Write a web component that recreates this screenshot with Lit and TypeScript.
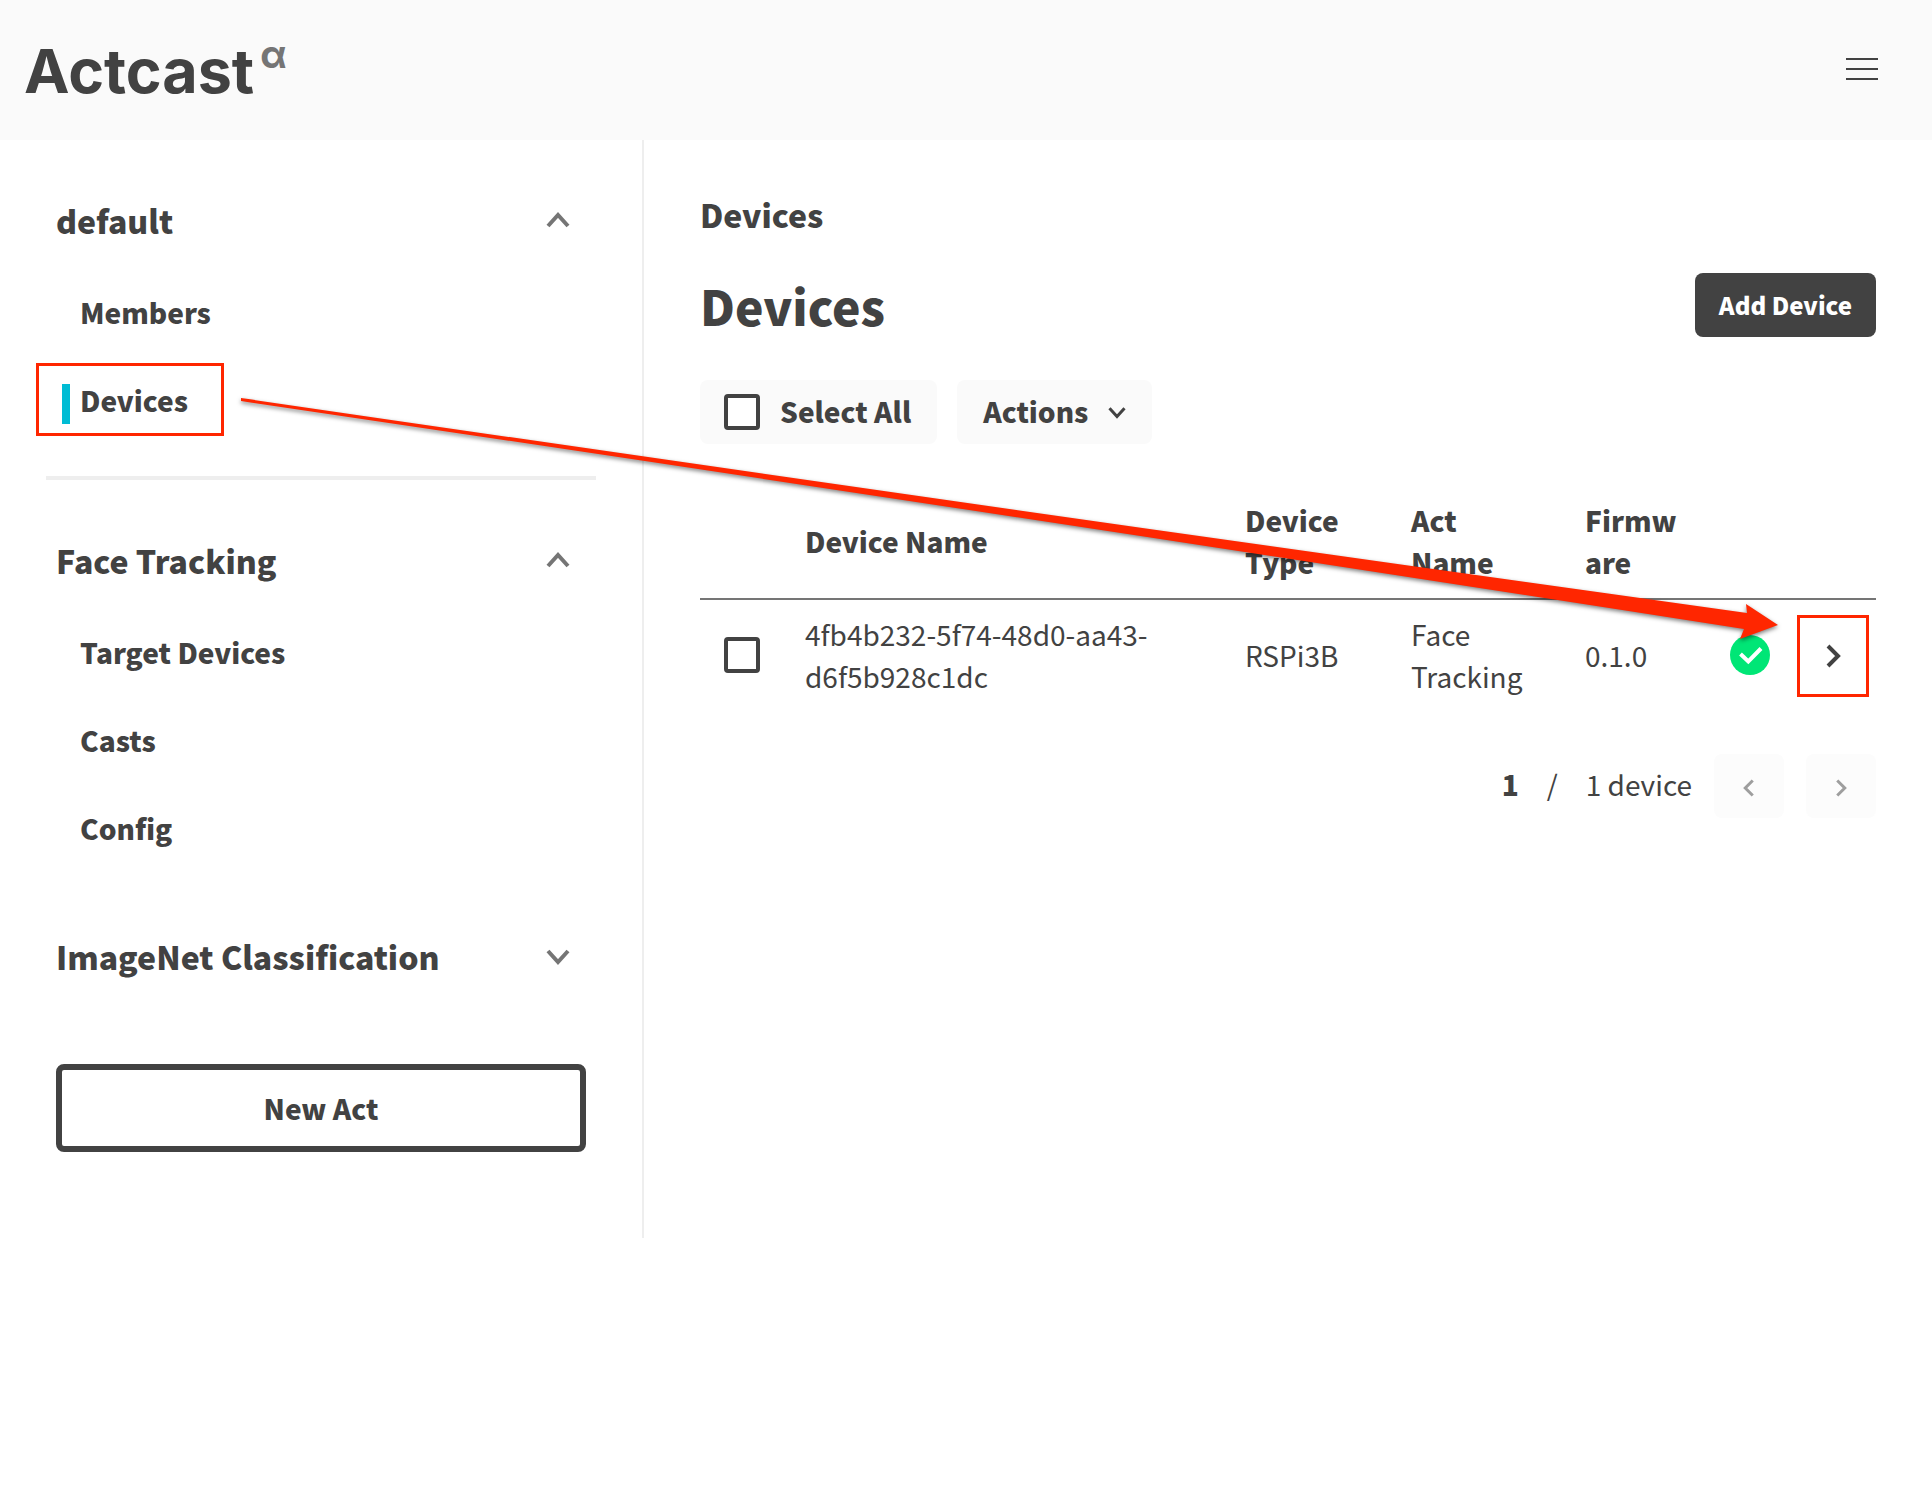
import { LitElement, html, css, svg } from "lit";
import { customElement, property, state } from "lit/decorators.js";
import { classMap } from "lit/directives/class-map.js";

type Direction = "up" | "down" | "left" | "right";

const CHEVRONS: Record<Direction, string> = {
  up: "M2 18 L12 7 L22 18",
  down: "M2 7 L12 18 L22 7",
  left: "M17 2 L7 12 L17 22",
  right: "M7 2 L17 12 L7 22",
};

@customElement("chevron-icon")
export class ChevronIcon extends LitElement {
  static styles = css`
    :host {
      display: block;
      flex: none;
      width: 24px;
      height: 24px;
    }
    :host([size="small"]) {
      width: 18px;
      height: 18px;
    }
    .icon {
      display: block;
      width: 100%;
      height: 100%;
      fill: none;
      stroke: currentColor;
      stroke-width: 4;
    }
  `;

  @property() direction: Direction = "down";

  render() {
    return html`<svg class="icon" viewBox="0 0 24 24" aria-hidden="true">
      ${svg`<path d=${CHEVRONS[this.direction]} />`}
    </svg>`;
  }
}

interface Section {
  name: string;
  open: boolean;
  links: string[];
}

interface Device {
  name: string;
  type: string;
  act: string;
  firmware: string;
}

@customElement("app-root")
export class AppRoot extends LitElement {
  static styles = css`
    :host {
      display: block;
      position: relative;
      min-height: 100vh;
      background: #fff;
      color: #424242;
      font-family: "Noto Sans CJK JP", "Noto Sans", sans-serif;
      font-size: 28px;
      line-height: 42px;
    }
    * {
      box-sizing: border-box;
    }
    button {
      padding: 0;
      border: 0;
      background: none;
      color: inherit;
      font: inherit;
      cursor: pointer;
    }
    a {
      color: inherit;
      text-decoration: none;
    }
    h1,
    p {
      margin: 0;
    }

    .topbar {
      display: flex;
      align-items: center;
      justify-content: space-between;
      height: 140px;
      padding: 0 54px 2px 24px;
      background: #fafafa;
    }
    .logo {
      display: flex;
      align-items: flex-start;
      gap: 6px;
      padding-top: 4px;
      font-family: Inter, sans-serif;
    }
    .wordmark {
      font-size: 61px;
      line-height: 72px;
      font-weight: 700;
    }
    .alpha {
      color: #757575;
      font-size: 38px;
      line-height: 38px;
      font-weight: 700;
    }
    .menu {
      display: flex;
      flex-direction: column;
      gap: 8px;
    }
    .menu-line {
      width: 32px;
      height: 2px;
      background: #424242;
    }

    .layout {
      display: flex;
      align-items: flex-start;
    }
    .sidebar {
      flex: 0 0 calc(100% / 3);
      padding: 32px 56px 86px;
      border-right: 2px solid #eee;
    }
    .section-toggle {
      display: flex;
      align-items: center;
      justify-content: space-between;
      width: 100%;
      height: 96px;
      padding-right: 16px;
      font-size: 32px;
      line-height: 48px;
      font-weight: 900;
      text-align: left;
    }
    .section-toggle chevron-icon {
      color: #757575;
    }
    .links {
      margin: 0;
      padding: 0;
      list-style: none;
    }
    .link {
      display: flex;
      align-items: center;
      position: relative;
      height: 88px;
      padding-left: 24px;
      font-weight: 900;
    }
    .link.current::before {
      content: "";
      position: absolute;
      left: 6px;
      top: 28px;
      width: 8px;
      height: 40px;
      background: #00bcd4;
    }
    .divider {
      height: 4px;
      margin: 32px -10px;
      border: 0;
      background: #eee;
    }
    .section + .section {
      margin-top: 36px;
    }
    .new-act {
      width: 100%;
      height: 88px;
      margin-top: 60px;
      border: 6px solid #424242;
      border-radius: 8px;
      font-weight: 900;
    }

    .main {
      flex: 1;
      min-width: 0;
      padding: 50px 56px 56px;
    }
    .crumb {
      font-size: 32px;
      line-height: 48px;
      font-weight: 900;
    }
    .title-row {
      display: flex;
      align-items: center;
      justify-content: space-between;
      margin-top: 31px;
    }
    .title {
      font-size: 48px;
      line-height: 72px;
      font-weight: 900;
    }
    .add {
      height: 64px;
      padding: 0 24px;
      border-radius: 8px;
      background: #424242;
      color: #fff;
      font-size: 24px;
      font-weight: 900;
    }
    .toolbar {
      display: flex;
      gap: 20px;
      margin-top: 39px;
    }
    .tool {
      display: flex;
      align-items: center;
      gap: 20px;
      height: 64px;
      padding: 0 26px;
      border-radius: 8px;
      background: #fafafa;
      font-weight: 900;
    }
    label.tool {
      padding-left: 24px;
    }
    .tool-text {
      padding-bottom: 2px;
    }
    .check {
      appearance: none;
      display: block;
      width: 36px;
      height: 36px;
      margin: 0;
      border: 4px solid #424242;
      border-radius: 4px;
      background: #fff;
    }
    .check:checked {
      background: #424242;
    }

    .devices {
      width: 100%;
      margin-top: 38px;
      border-spacing: 0;
      table-layout: fixed;
      text-align: left;
    }
    .devices th {
      padding: 17px 24px 15px 0;
      border-bottom: 2px solid #757575;
      font-weight: 900;
      overflow-wrap: anywhere;
    }
    .devices td {
      padding: 13px 24px 11px 0;
      overflow-wrap: anywhere;
    }
    .devices .pick {
      width: 105px;
      padding-left: 24px;
    }
    .type {
      width: 166px;
    }
    .devices .act {
      width: 174px;
      padding-right: 44px;
    }
    .firmware {
      width: 121px;
    }
    .devices .status {
      width: 88px;
      padding-right: 0;
    }
    .devices .open {
      width: 82px;
      padding: 0;
    }
    .ok {
      display: block;
      width: 40px;
      height: 40px;
      margin: 0 auto;
    }
    .details {
      display: flex;
      align-items: center;
      justify-content: center;
      position: relative;
      width: 72px;
      height: 82px;
      margin: 4px 0 0 3px;
    }

    .pager {
      display: flex;
      align-items: center;
      justify-content: flex-end;
      gap: 22px;
      margin-top: 46px;
    }
    .page {
      font-weight: 900;
    }
    .pager-text {
      display: flex;
      gap: 28px;
      padding-bottom: 4px;
    }
    .pager-button {
      display: flex;
      align-items: center;
      justify-content: center;
      width: 70px;
      height: 64px;
      padding-top: 4px;
      border-radius: 8px;
      background: #fcfcfc;
      color: #9e9e9e;
    }

    .mark {
      position: absolute;
      border: 3px solid #ff2600;
      pointer-events: none;
    }
    .mark-link {
      left: -20px;
      top: 7px;
      width: 188px;
      height: 73px;
    }
    .mark-details {
      inset: 0;
    }
    .arrow {
      position: absolute;
      left: 0;
      top: 0;
      width: 1800px;
      height: 660px;
      pointer-events: none;
      filter: drop-shadow(0 2px 2px rgba(0, 0, 0, 0.5));
    }
  `;

  @state() private sections: Section[] = [
    { name: "default", open: true, links: ["Members", "Devices"] },
    { name: "Face Tracking", open: true, links: ["Target Devices", "Casts", "Config"] },
    { name: "ImageNet Classification", open: false, links: [] },
  ];

  @state() private selected = false;

  private devices: Device[] = [
    {
      name: "4fb4b232-5f74-48d0-aa43-d6f5b928c1dc",
      type: "RSPi3B",
      act: "Face Tracking",
      firmware: "0.1.0",
    },
  ];

  private toggle(section: Section) {
    this.sections = this.sections.map((s) => (s === section ? { ...s, open: !s.open } : s));
  }

  private select(event: Event) {
    this.selected = (event.target as HTMLInputElement).checked;
  }

  private renderSection(section: Section) {
    return html`<section class="section">
      <button class="section-toggle" aria-expanded=${section.open} @click=${() => this.toggle(section)}>
        <span>${section.name}</span>
        <chevron-icon direction=${section.open ? "up" : "down"}></chevron-icon>
      </button>
      ${section.open
        ? html`<ul class="links">
            ${section.links.map((link) => {
              const current = link === "Devices";
              return html`<li>
                <a class=${classMap({ link: true, current })} href="#"
                  >${link}${current ? html`<span class="mark mark-link"></span>` : ""}</a
                >
              </li>`;
            })}
          </ul>`
        : ""}
    </section>`;
  }

  private renderDevice(device: Device) {
    return html`<tr>
      <td class="pick">
        <input
          class="check"
          type="checkbox"
          aria-label="Select ${device.name}"
          .checked=${this.selected}
          @change=${this.select}
        />
      </td>
      <td>${device.name}</td>
      <td>${device.type}</td>
      <td class="act">${device.act}</td>
      <td>${device.firmware}</td>
      <td class="status">
        <svg class="ok" viewBox="0 0 40 40" role="img" aria-label="Online">
          <circle cx="20" cy="20" r="20" fill="#00e676" />
          <path d="M10.5 19 L18.3 26.5 L31 13.5" fill="none" stroke="#fff" stroke-width="4" />
        </svg>
      </td>
      <td class="open">
        <button class="details" aria-label="Open device">
          <chevron-icon direction="right"></chevron-icon>
          <span class="mark mark-details"></span>
        </button>
      </td>
    </tr>`;
  }

  render() {
    const [team, ...acts] = this.sections;
    return html`
      <header class="topbar">
        <a class="logo" href="#"><span class="wordmark">Actcast</span><span class="alpha">α</span></a>
        <button class="menu" aria-label="Menu">
          <span class="menu-line"></span>
          <span class="menu-line"></span>
          <span class="menu-line"></span>
        </button>
      </header>
      <div class="layout">
        <nav class="sidebar">
          ${this.renderSection(team)}
          <hr class="divider" />
          ${acts.map((section) => this.renderSection(section))}
          <button class="new-act">New Act</button>
        </nav>
        <main class="main">
          <p class="crumb">Devices</p>
          <div class="title-row">
            <h1 class="title">Devices</h1>
            <button class="add">Add Device</button>
          </div>
          <div class="toolbar">
            <label class="tool">
              <input class="check" type="checkbox" .checked=${this.selected} @change=${this.select} />
              <span class="tool-text">Select All</span>
            </label>
            <button class="tool">
              <span class="tool-text">Actions</span>
              <chevron-icon size="small" direction="down"></chevron-icon>
            </button>
          </div>
          <table class="devices">
            <thead>
              <tr>
                <th class="pick"></th>
                <th>Device Name</th>
                <th class="type">Device Type</th>
                <th class="act">Act Name</th>
                <th class="firmware">Firmware</th>
                <th class="status"></th>
                <th class="open"></th>
              </tr>
            </thead>
            <tbody>
              ${this.devices.map((device) => this.renderDevice(device))}
            </tbody>
          </table>
          <div class="pager">
            <div class="pager-text">
              <span class="page">1</span>
              <span>/</span>
              <span>1 device</span>
            </div>
            <button class="pager-button" aria-label="Previous page">
              <chevron-icon size="small" direction="left"></chevron-icon>
            </button>
            <button class="pager-button" aria-label="Next page">
              <chevron-icon size="small" direction="right"></chevron-icon>
            </button>
          </div>
        </main>
      </div>
      <svg class="arrow" viewBox="0 0 1800 660" aria-hidden="true">
        <path
          d="M241 398 Q994 508 1747 613 L1746 604 L1778 625 L1740 639 L1744 629 Q992 512 241 401 Z"
          fill="#ff2600"
        />
      </svg>
    `;
  }
}
